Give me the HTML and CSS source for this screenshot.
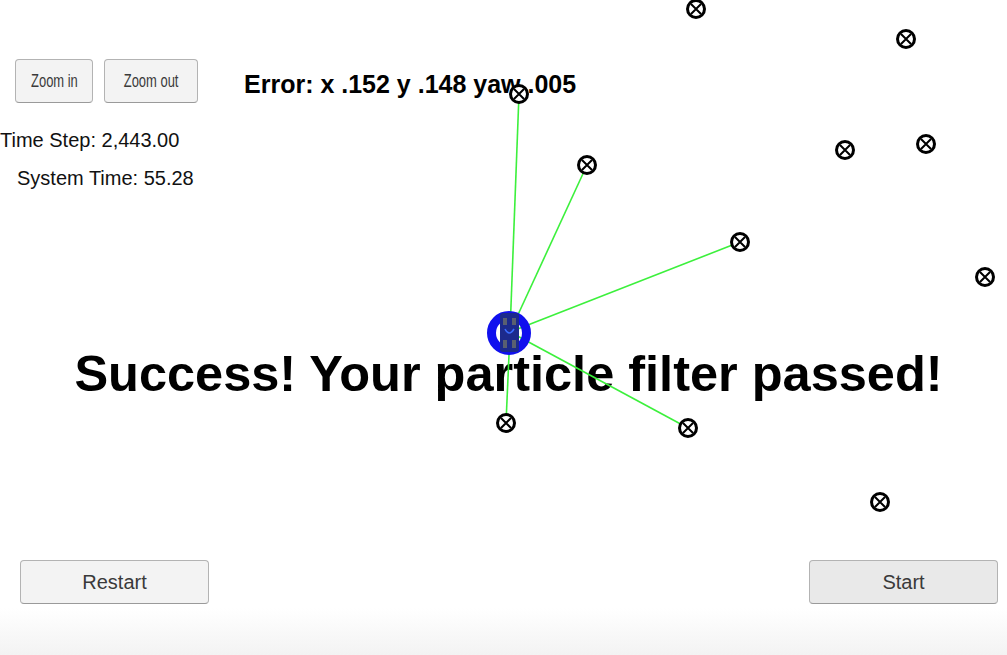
FILE: index.html
```html
<!DOCTYPE html>
<html lang="en">
<head>
<meta charset="utf-8">
<title>Particle Filter</title>
<link rel="stylesheet" href="styles.css">
</head>
<body>
<div class="stage">
  <div class="hud">
    <div class="top">
      <div class="panel">
        <div class="zoom-row">
          <button class="btn btn-zoom btn-in"><span class="narrow">Zoom in</span></button>
          <button class="btn btn-zoom btn-out"><span class="narrow">Zoom out</span></button>
        </div>
        <div class="stat stat-step">Time Step: 2,443.00</div>
        <div class="stat stat-sys">System Time: 55.28</div>
      </div>
      <div class="error">Error: x .152 y .148 yaw .005</div>
    </div>
    <div class="message">Success! Your particle filter passed!</div>
    <div class="bottom">
      <button class="btn btn-big">Restart</button>
      <button class="btn btn-big btn-start">Start</button>
    </div>
  </div>
  <svg class="field" width="1007" height="655" viewBox="0 0 1007 655">
    <g class="rays">
      <line x1="510" y1="332" x2="519" y2="94"/>
      <line x1="510" y1="332" x2="587" y2="165"/>
      <line x1="510" y1="332" x2="740" y2="242"/>
      <line x1="510" y1="332" x2="506" y2="423"/>
      <line x1="510" y1="332" x2="688" y2="428"/>
    </g>
    <g class="robot">
      <circle cx="509" cy="333" r="17.5" class="ring"/>
      <rect x="500" y="313" width="19" height="39" rx="3" class="car"/>
      <rect x="503" y="318" width="4" height="7" class="part"/>
      <rect x="512" y="318" width="4" height="7" class="part"/>
      <rect x="503" y="340" width="4" height="8" class="part"/>
      <rect x="512" y="340" width="4" height="8" class="part"/>
      <path d="M505 329 q4 8 9 0" class="glass"/>
    </g>
    <g class="marks">
      <g transform="translate(696 9)"><circle r="8.5"/><path d="M-5 -5 L5 5 M5 -5 L-5 5"/></g>
      <g transform="translate(906 39)"><circle r="8.5"/><path d="M-5 -5 L5 5 M5 -5 L-5 5"/></g>
      <g transform="translate(519 94)"><circle r="8.5"/><path d="M-5 -5 L5 5 M5 -5 L-5 5"/></g>
      <g transform="translate(587 165)"><circle r="8.5"/><path d="M-5 -5 L5 5 M5 -5 L-5 5"/></g>
      <g transform="translate(845 150)"><circle r="8.5"/><path d="M-5 -5 L5 5 M5 -5 L-5 5"/></g>
      <g transform="translate(926 144)"><circle r="8.5"/><path d="M-5 -5 L5 5 M5 -5 L-5 5"/></g>
      <g transform="translate(740 242)"><circle r="8.5"/><path d="M-5 -5 L5 5 M5 -5 L-5 5"/></g>
      <g transform="translate(985 277)"><circle r="8.5"/><path d="M-5 -5 L5 5 M5 -5 L-5 5"/></g>
      <g transform="translate(506 423)"><circle r="8.5"/><path d="M-5 -5 L5 5 M5 -5 L-5 5"/></g>
      <g transform="translate(688 428)"><circle r="8.5"/><path d="M-5 -5 L5 5 M5 -5 L-5 5"/></g>
      <g transform="translate(880 502)"><circle r="8.5"/><path d="M-5 -5 L5 5 M5 -5 L-5 5"/></g>
    </g>
  </svg>
</div>
</body>
</html>
```

FILE: styles.css
```css
* { box-sizing: border-box; }
html, body { margin: 0; padding: 0; }
body {
  font-family: "Liberation Sans", Arial, sans-serif;
  color: #000;
  background: #fff;
}
.stage {
  position: relative;
  width: 1007px;
  height: 655px;
  overflow: hidden;
  background: linear-gradient(to bottom, #ffffff 0px, #ffffff 608px, #f3f3f3 655px);
}
.hud {
  display: flex;
  flex-direction: column;
  height: 100%;
}
.top {
  display: flex;
  align-items: flex-start;
}
.panel {
  display: flex;
  flex-direction: column;
  padding-top: 59px;
  width: 244px;
}
.zoom-row {
  display: flex;
  gap: 11px;
  padding-left: 15px;
}
.btn {
  font-family: "Liberation Sans", Arial, sans-serif;
  background: #f3f3f3;
  border: 1px solid #b3b3b3;
  border-bottom-color: #9a9a9a;
  border-radius: 4px;
  color: #3a3a3a;
  padding: 0;
  cursor: pointer;
}
.btn-zoom {
  height: 44px;
  font-size: 18.5px;
}
.narrow {
  display: inline-block;
  transform: scaleX(0.7);
}
.btn-in { width: 78px; }
.btn-out { width: 94px; }
.stat {
  font-size: 20px;
  line-height: 22px;
  color: #111;
}
.stat-step { margin-top: 26px; }
.stat-sys { margin-top: 16px; padding-left: 17px; }
.error {
  margin-top: 71px;
  font-size: 25px;
  font-weight: bold;
  line-height: 26px;
}
.message {
  margin-top: 156px;
  text-align: center;
  font-size: 50.5px;
  font-weight: bold;
  line-height: 58px;
  padding-left: 10px;
}
.bottom {
  margin-top: auto;
  margin-bottom: 51px;
  display: flex;
  justify-content: space-between;
  padding: 0 9px 0 20px;
}
.btn-big {
  width: 189px;
  height: 44px;
  font-size: 20px;
}
.btn-start { background: #e9e9e9; }
.field {
  position: absolute;
  left: 0;
  top: 0;
  pointer-events: none;
}
.rays line {
  stroke: #3cf03c;
  stroke-width: 1.6;
}
.ring {
  fill: none;
  stroke: #1010ee;
  stroke-width: 9;
}
.car { fill: #1c2a8c; }
.part { fill: #5a6070; }
.glass { fill: none; stroke: #3a6cff; stroke-width: 1.5; }
.marks circle {
  fill: #fff;
  stroke: #000;
  stroke-width: 3;
}
.marks path {
  stroke: #000;
  stroke-width: 2;
}
```
